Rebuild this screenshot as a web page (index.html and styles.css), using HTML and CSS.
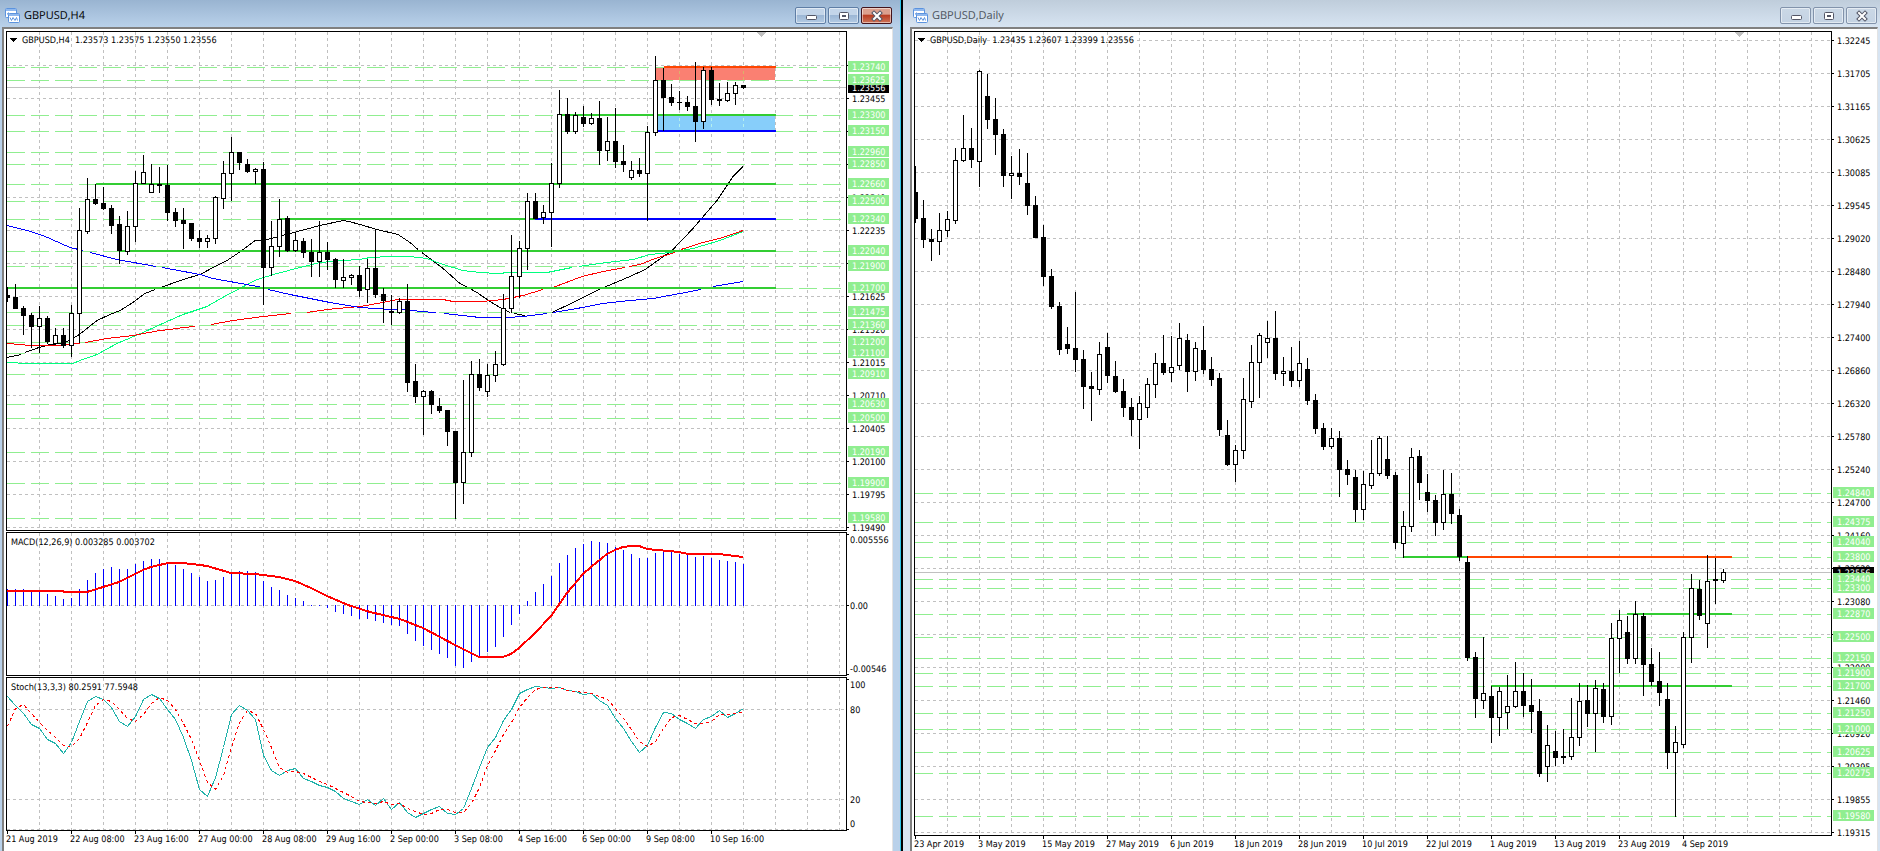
FILE: index.html
```html
<!DOCTYPE html>
<html lang="en">
<head>
    <meta charset="UTF-8">
    <meta name="viewport" content="width=device-width, initial-scale=1.0">
    <title>GBPUSD charts</title>
    <link rel="stylesheet" href="styles.css">
</head>
<body>
    <!-- H4 window -->
    <section class="window active">
        <header class="titlebar">
            <svg class="app-icon" viewBox="0 0 15 15">
                <rect x="0.5" y="0.5" width="11" height="9" rx="1" fill="#fff" stroke="#5b93de"/>
                <path d="M1 2h10" stroke="#8fb8ee" stroke-width="2"/>
                <path d="M2 6h1v-1h1v2h1" stroke="#5b93de" fill="none"/>
                <rect x="3.5" y="5.5" width="11" height="9" rx="1" fill="#fff" stroke="#5b93de"/>
                <path d="M4 7h10" stroke="#8fb8ee" stroke-width="2"/>
                <path d="M5 9.500l1.500 3l1.500 -3l2 3l1.500 -3l1 3" stroke="#5b93de" fill="none"/>
            </svg>
            <h1>GBPUSD,H4</h1>
            <button type="button" aria-label="Minimize"><svg viewBox="0 0 12 12"><rect x="1.500" y="5.500" width="10" height="4" rx="1" fill="#fff" stroke="#535666"/></svg></button>
            <button type="button" aria-label="Restore"><svg viewBox="0 0 12 12"><rect x="1.500" y="2.500" width="9" height="7" rx="1" fill="#fff" stroke="#535666"/><rect x="4.500" y="5.500" width="3" height="1" fill="#9db5d0" stroke="#535666"/></svg></button>
            <button type="button" class="close" aria-label="Close"><svg viewBox="0 0 12 12"><path d="M3 3l6 6M9 3l-6 6" stroke="#535666" stroke-width="4" stroke-linecap="square"/><path d="M3 3l6 6M9 3l-6 6" stroke="#fff" stroke-width="2" stroke-linecap="square"/></svg></button>
        </header>
        <div class="client">
            <svg class="panel price" id="h4Price"></svg>
            <svg class="panel macd" id="h4Macd"></svg>
            <svg class="panel stoch" id="h4Stoch"></svg>
            <ol class="times tall">
                <li>21 Aug 2019</li>
                <li>22 Aug 08:00</li>
                <li>23 Aug 16:00</li>
                <li>27 Aug 00:00</li>
                <li>28 Aug 08:00</li>
                <li>29 Aug 16:00</li>
                <li>2 Sep 00:00</li>
                <li>3 Sep 08:00</li>
                <li>4 Sep 16:00</li>
                <li>6 Sep 00:00</li>
                <li>9 Sep 08:00</li>
                <li>10 Sep 16:00</li>
            </ol>
        </div>
    </section>

    <!-- Daily window -->
    <section class="window daily">
        <header class="titlebar">
            <svg class="app-icon" viewBox="0 0 15 15">
                <rect x="0.5" y="0.5" width="11" height="9" rx="1" fill="#fff" stroke="#5b93de"/>
                <path d="M1 2h10" stroke="#8fb8ee" stroke-width="2"/>
                <path d="M2 6h1v-1h1v2h1" stroke="#5b93de" fill="none"/>
                <rect x="3.5" y="5.5" width="11" height="9" rx="1" fill="#fff" stroke="#5b93de"/>
                <path d="M4 7h10" stroke="#8fb8ee" stroke-width="2"/>
                <path d="M5 9.500l1.500 3l1.500 -3l2 3l1.500 -3l1 3" stroke="#5b93de" fill="none"/>
            </svg>
            <h1>GBPUSD,Daily</h1>
            <button type="button" aria-label="Minimize"><svg viewBox="0 0 12 12"><rect x="1.500" y="5.500" width="10" height="4" rx="1" fill="#fff" stroke="#535666"/></svg></button>
            <button type="button" aria-label="Restore"><svg viewBox="0 0 12 12"><rect x="1.500" y="2.500" width="9" height="7" rx="1" fill="#fff" stroke="#535666"/><rect x="4.500" y="5.500" width="3" height="1" fill="#c9d7e6" stroke="#535666"/></svg></button>
            <button type="button" aria-label="Close"><svg viewBox="0 0 12 12"><path d="M3 3l6 6M9 3l-6 6" stroke="#535666" stroke-width="4" stroke-linecap="square"/><path d="M3 3l6 6M9 3l-6 6" stroke="#fff" stroke-width="2" stroke-linecap="square"/></svg></button>
        </header>
        <div class="client">
            <svg class="panel price" id="d1Price"></svg>
            <ol class="times">
                <li>23 Apr 2019</li>
                <li>3 May 2019</li>
                <li>15 May 2019</li>
                <li>27 May 2019</li>
                <li>6 Jun 2019</li>
                <li>18 Jun 2019</li>
                <li>28 Jun 2019</li>
                <li>10 Jul 2019</li>
                <li>22 Jul 2019</li>
                <li>1 Aug 2019</li>
                <li>13 Aug 2019</li>
                <li>23 Aug 2019</li>
                <li>4 Sep 2019</li>
            </ol>
        </div>
    </section>

    <script src="charts.js"></script>
</body>
</html>
```

FILE: styles.css
```css
* {
    box-sizing: border-box;
}

body {
    margin: 0;
    height: 100vh;
    display: grid;
    grid-template-columns: minmax(0, 903fr) minmax(0, 977fr);
    overflow: hidden;
    background: #000;
    font-family: Tahoma, "DejaVu Sans Condensed", "Noto Sans", sans-serif;
    font-size: 9px;
    color: #000;
    text-rendering: geometricPrecision;
}

/* MDI windows */
.window {
    display: flex;
    flex-direction: column;
    min-width: 0;
    min-height: 0;
}

.window.active {
    padding: 0 7px 0 2px;
    background: #b9d1ea;
    border-right: 1px solid #2bc4e8;
    margin-right: 2px;
}

.window.daily {
    padding: 0 2px 0 7px;
    background: #d7e4f2;
}

.titlebar {
    display: flex;
    align-items: center;
    gap: 2px;
    height: 27px;
    flex: none;
    padding: 4px 8px 0 3px;
    margin: 0 -7px 0 -2px;
    background: linear-gradient(#99b4d1, #b9d1ea);
}

.daily .titlebar {
    margin: 0 -2px 0 -7px;
    padding: 4px 3px 0 10px;
    background: linear-gradient(#bfcddb, #d7e4f2);
}

.app-icon {
    width: 15px;
    height: 15px;
    margin: 0 2px;
}

.daily .app-icon {
    margin-left: 0;
}

.titlebar h1 {
    flex: 1;
    margin: 0;
    font-family: "Segoe UI", "Open Sans", sans-serif;
    font-size: 11px;
    font-weight: normal;
    line-height: 16px;
}

.daily h1 {
    color: #4c535c;
}

.titlebar button {
    display: flex;
    align-items: center;
    justify-content: center;
    width: 31px;
    height: 17px;
    padding: 0;
    border: 1px solid #5f7ea5;
    border-radius: 2px;
    background: linear-gradient(#c3d5e9 45%, #9cb7d5 50%, #b4cbe4);
    box-shadow: inset 0 0 0 1px rgba(255, 255, 255, 0.5);
}

.titlebar button svg {
    width: 12px;
    height: 12px;
}

.titlebar .close {
    border-color: #43131b;
    background: linear-gradient(#dba08f 40%, #b93f25 50%, #cd7458);
}

.daily .titlebar button {
    border-color: #8293ab;
    background: linear-gradient(#cbd8e6, #c4d3e3);
}

.client {
    flex: 1;
    min-height: 0;
    display: flex;
    flex-direction: column;
    gap: 1px;
    padding: 2px 0 0 2px;
    background: #fff;
    border: 2px solid #696969;
    border-color: #808080 #e3e3e3 #fff #808080;
    border-width: 2px 1px 0 2px;
}

.daily .client {
    gap: 0;
}

/* chart panels */
.panel {
    display: block;
    width: 100%;
    min-height: 0;
    overflow: visible;
    shape-rendering: crispEdges;
}

.price {
    flex: 500 1 0;
}

.macd {
    flex: 144 1 0;
}

.stoch {
    flex: 154 1 0;
}

.times {
    display: flex;
    flex: none;
    height: 15px;
    margin: 0;
    padding: 0;
    list-style: none;
    white-space: nowrap;
    line-height: 11px;
}

.times.tall {
    height: 20px;
    margin-top: -1px;
}

.times li {
    flex: none;
    width: 64px;
    padding-top: 4px;
    background: linear-gradient(#000, #000) 1px 0 / 1px 3px no-repeat;
}

/* svg parts */
.grid {
    stroke: #c0c0c0;
    stroke-dasharray: 3 3;
}

.level {
    stroke: #90ee90;
    stroke-dasharray: 18 6;
}

.bid {
    stroke: #c0c0c0;
}

.frame {
    fill: none;
    stroke: #000;
}

.tag-text {
    fill: #fff;
}

.line {
    fill: none;
}

.stoch-signal {
    stroke-dasharray: 3 3;
}
```

FILE: charts.js
```js
// candle: type (w = up, b = down), high, body top, body bottom, low
const h4Candles = `b 287 295 298 302,b 284 297 309 309,b 306 308 316 335,b 313 315 327 348,w 306 318 327 353,b 316 318 342 344,
w 328 335 344 344,b 328 335 346 348,w 305 313 346 357,w 208 230 314 343,w 178 199 232 234,b 184 199 204 205,
b 187 203 209 210,b 205 208 226 234,b 216 224 251 264,w 211 226 252 255,w 171 183 227 242,w 155 172 184 184,
w 164 184 193 193,b 167 184 186 193,b 165 185 213 221,b 208 212 221 227,b 208 220 224 249,b 223 223 239 241,
b 230 238 242 248,w 235 238 242 248,w 196 197 239 244,w 161 173 199 209,w 137 152 174 201,b 152 152 163 170,
b 159 164 172 173,w 168 169 172 184,b 162 169 268 305,w 221 246 268 276,w 199 219 247 257,b 216 218 251 252,
w 233 240 251 252,b 238 241 253 258,b 239 252 262 277,w 221 252 262 277,b 242 252 260 270,b 258 259 280 288,
w 259 277 281 288,w 274 275 278 285,b 266 275 291 297,w 259 268 290 303,b 229 268 295 298,b 288 294 301 323,
b 295 311 313 325,w 298 301 313 314,b 284 301 383 392,b 364 381 397 403,w 390 391 397 435,b 390 391 405 414,
b 398 406 411 413,b 410 410 432 446,b 431 431 483 519,w 380 452 483 504,w 361 374 453 457,b 359 374 388 391,
w 364 375 392 397,w 351 364 376 382,w 294 308 365 366,w 235 276 309 313,w 241 248 277 298,w 193 201 249 270,
b 193 201 219 219,w 205 212 218 224,w 163 183 213 247,w 90 114 184 188,b 98 114 132 134,w 112 115 132 134,
b 106 117 124 127,w 113 118 124 125,b 101 118 151 165,w 117 141 151 161,b 108 141 162 168,b 145 161 165 172,
w 161 170 178 180,b 158 170 174 177,w 126 132 174 221,w 56 80 133 136,b 68 80 98 131,b 84 97 103 106,
b 91 102 103 110,b 96 102 107 111,b 62 106 122 142,w 67 70 122 129,b 67 70 100 105,b 83 99 101 106,
w 82 93 101 102,w 82 85 94 105,b 85 85 88 89`;

const d1Candles = `b 166 192 219 223,b 200 218 240 248,b 229 239 242 261,w 213 230 242 255,w 211 219 231 237,w 148 160 221 224,
w 115 148 161 162,b 128 148 160 168,w 70 71 162 187,b 74 96 120 129,b 98 119 135 155,b 129 134 176 187,
w 156 173 176 199,b 149 173 177 185,b 153 183 206 215,b 196 205 238 238,b 225 237 277 286,b 269 276 307 309,
b 302 306 350 355,b 327 344 349 354,b 292 348 360 372,b 350 359 387 409,b 372 386 389 421,w 342 354 390 395,
b 333 347 376 383,b 361 376 392 393,b 379 391 408 417,b 398 407 420 436,w 396 403 420 449,w 378 384 408 418,
w 353 363 385 398,b 335 363 373 375,w 336 367 373 382,w 323 338 366 370,b 334 340 372 392,w 342 348 372 381,
b 326 350 370 374,b 357 369 380 386,b 373 378 430 436,b 420 435 465 466,w 445 450 465 482,w 378 399 451 459,
w 345 362 402 408,w 333 335 363 398,w 321 338 343 358,b 311 338 374 380,w 357 371 374 386,b 347 371 381 387,
w 341 363 381 387,b 358 369 401 405,b 394 400 429 434,b 423 428 447 450,w 428 438 447 449,b 431 438 470 497,
b 460 469 475 485,b 470 477 510 522,w 471 484 510 520,w 440 473 486 489,w 436 438 474 476,b 436 459 476 479,
b 472 475 543 549,w 511 526 544 558,w 448 457 527 532,b 450 456 483 500,b 474 492 501 512,b 495 500 523 536,
w 470 494 523 530,b 473 494 514 524,b 509 515 557 561,b 556 562 658 661,b 652 657 699 718,w 637 693 701 709,
b 686 696 718 743,w 687 691 718 736,w 675 706 713 729,w 662 691 707 708,b 673 691 706 717,b 679 705 712 733,
b 699 711 774 777,w 725 745 767 782,b 731 751 758 766,b 729 756 758 764,w 698 737 757 760,w 683 701 738 746,
b 685 700 714 727,w 680 688 714 752,b 683 689 717 723,w 623 638 717 725,w 610 620 639 673,b 616 632 659 664,
w 601 614 659 664,b 613 616 665 696,b 648 664 682 686,b 652 681 693 706,b 683 699 753 769,w 726 742 753 817,
w 632 637 745 748,w 574 588 638 663,b 580 589 616 620,w 555 581 624 648,b 558 579 581 604,w 569 572 581 583`;

// horizontal levels: y, price
const h4Levels = [[67, '1.23740'], [80, '1.23625'], [115, '1.23300'], [131, '1.23150'], [152, '1.22960'], [164, '1.22850'],
    [184, '1.22660'], [201, '1.22500'], [219, '1.22340'], [251, '1.22040'], [266, '1.21900'], [288, '1.21700'],
    [312, '1.21475'], [325, '1.21360'], [342, '1.21200'], [353, '1.21100'], [374, '1.20910'], [404, '1.20630'],
    [418, '1.20500'], [452, '1.20190'], [483, '1.19900'], [518, '1.19580']];
const d1Levels = [[493, '1.24840'], [522, '1.24375'], [542, '1.24040'], [557, '1.23800'], [579, '1.23440'], [588, '1.23300'],
    [614, '1.22870'], [637, '1.22500'], [658, '1.22150'], [673, '1.21900'], [686, '1.21700'], [713, '1.21250'],
    [729, '1.21000'], [752, '1.20625'], [773, '1.20275'], [816, '1.19580']];

// scale labels, 33px apart; the empty ones sit fully behind a level tag
const h4Prices = ['', '1.23455', '', '', '1.22540', '1.22235', '', '1.21625', '1.21320',
    '1.21015', '1.20710', '1.20405', '1.20100', '1.19795', '1.19490'];
const d1Prices = ['1.32245', '1.31705', '1.31165', '1.30625', '1.30085', '1.29545', '1.29020', '1.28480', '1.27940',
    '1.27400', '1.26860', '1.26320', '1.25780', '1.25240', '1.24700', '1.24160', '1.23620', '1.23080', '',
    '1.22000', '1.21460', '1.20920', '1.20395', '1.19855', '1.19315'];

// moving averages
const averages = [
    ['#000', 'M7 357L21 354M25 352L39 347L50 344L63 343L78 335L97 320L110 314L120 310L133 302L145 293L155 289M161 287L183 279L200 274L215 266L227 260L242 250L255 240L267 239L290 233L320 225L343 220L349 221L360 224L377 229L398 234L410 242L418 249M422 252L443 268L460 283L468 287L477 292L490 301L500 307L510 312M514 313L525 315M552 312L573 302L599 289L630 276L645 269L672 250L693 228L717 200L733 176L743 166'],
    ['#00ff7f', 'M7 362L28 363L45 363L73 363L80 360L97 354L117 343L143 332L167 321L183 314L207 306L228 294L257 279L277 273L300 267L320 262L343 260L360 259L370 257L390 256L410 256L427 258L443 264L463 270L480 272L497 273L510 272L547 272L557 270L572 267M579 266L607 262L633 259L650 254L670 252L693 248L703 245L720 240L743 231'],
    ['#f00', 'M7 343L20 344L30 345L58 345L80 343M85 342L107 338L133 335L160 330L170 329L183 327L195 326M211 324L233 320L263 316L291 313M307 312L327 309L360 306L383 302L397 299L443 299L453 301L482 301L503 299L523 295L543 289M553 287L582 276L603 271L625 267M629 266L640 264L655 258L675 252M681 249L703 242L723 237L743 230'],
    ['#00f', 'M7 225L27 230L43 235L70 247L83 250M90 252L117 259L156 266M162 267L173 269L200 274L213 278L263 287M268 289L290 294L320 300L330 302L360 307L390 309L407 309L420 311L436 312M444 313L480 317L507 317L523 316L547 313M553 312L577 308L603 303L630 300L653 298L680 293L701 289M713 286L743 281']
];

const macdBars = [589, 589, 589, 591, 591, 594, 596, 599, 598, 589, 580, 573, 569, 567, 569, 569, 564, 561, 559, 559, 562,
    565, 569, 573, 577, 581, 580, 577, 573, 571, 571, 572, 581, 587, 590, 595, 598, 601, 605, 605, 608, 612, 614, 616,
    619, 619, 621, 623, 625, 626, 634, 641, 646, 650, 654, 658, 666, 668, 662, 657, 652, 647, 637, 625, 614, 601, 592,
    584, 576, 563, 555, 548, 544, 541, 542, 543, 547, 550, 554, 558, 558, 553, 551, 552, 554, 555, 557, 556, 558, 560,
    561, 562, 564];
const macdSignal = 'M6 591L63 591L64 592L87 592L103 587L119 582L127 578L143 570L151 567L168 563L182 563L200 565L207 566L231 573L255 574L279 577L295 581L311 588L327 596L348 605L370 612L400 619L423 628L440 637L455 645L471 653L479 657L503 657L511 654L519 648L535 633L551 616L567 593L583 574L591 567L607 554L615 550L623 547L632 546L639 546L647 549L679 552L688 554L719 554L735 556L743 557';

const stochMain = [696, 705, 713, 724, 728, 739, 743, 753, 742, 721, 701, 696, 699, 707, 721, 726, 716, 699, 694, 698, 709,
    719, 737, 760, 789, 796, 777, 747, 714, 705, 710, 719, 755, 770, 775, 770, 768, 778, 781, 785, 787, 791, 798, 801,
    804, 799, 805, 798, 809, 802, 812, 817, 813, 809, 806, 813, 814, 808, 788, 767, 747, 737, 720, 709, 693, 689, 686,
    687, 688, 687, 690, 691, 694, 693, 700, 705, 718, 728, 741, 752, 745, 727, 712, 713, 719, 723, 728, 719, 716, 710,
    717, 713, 708];
const stochSignal = [726, 708, 704, 713, 722, 730, 737, 745, 746, 738, 722, 705, 699, 701, 709, 718, 721, 714, 703, 697,
    700, 709, 723, 739, 760, 782, 789, 775, 747, 722, 710, 713, 729, 747, 767, 772, 771, 773, 777, 781, 784, 788, 792,
    796, 801, 802, 803, 801, 804, 803, 808, 811, 814, 813, 809, 809, 812, 812, 803, 787, 765, 750, 734, 722, 707, 697,
    689, 687, 687, 687, 690, 691, 692, 693, 696, 699, 708, 718, 729, 741, 746, 741, 728, 717, 715, 719, 723, 723, 721,
    714, 714, 713, 712];

const STEP = 8;

function rect(x, y, w, h, fill) {
    return `<rect x="${x}" y="${y}" width="${w}" height="${h}" fill="${fill}"/>`;
}

function hline(x1, x2, y, cls) {
    return `<path class="${cls}" d="M${x1} ${y + 0.5}H${x2}"/>`;
}

function text(x, y, str, cls) {
    return `<text x="${x}" y="${y}" class="${cls || ''}">${str}</text>`;
}

// vertical grid, every 4 candles
function vgrid(x0, y1, y2, right) {
    let out = '';
    for (let x = x0 + 33; x < right; x += 32) {
        out += `<path class="grid" d="M${x + 0.5} ${y1}V${y2}"/>`;
    }
    return out;
}

function candles(data, x0) {
    return data.split(',').map((row, i) => {
        const [type, hi, top, bottom, lo] = row.trim().split(' ');
        const x = x0 + 1 + i * STEP;
        const left = i === 0 ? x : x - 2;
        const width = x + 3 - left;
        let out = rect(x, hi, 1, lo - hi, '#000') + rect(left, top, width, bottom - top, '#000');
        if (type === 'w') {
            out += rect(left + 1, +top + 1, width - 2, bottom - top - 2, '#fff');
        }
        return out;
    }).join('');
}

function polyline(values, x0) {
    return 'M' + values.map((y, i) => `${x0 + 1.5 + i * STEP} ${y + 0.5}`).join('L');
}

// draw a panel, x0/y0 is the top left corner of its frame
function draw(id, x0, y0, build) {
    const svg = document.getElementById(id);
    const w = svg.clientWidth;
    const h = svg.clientHeight;
    const axis = x0 + w - 46;
    const bottom = y0 + h - 1;
    svg.setAttribute('viewBox', `${x0} ${y0} ${w} ${h}`);
    svg.innerHTML = build(axis, bottom) +
        `<path class="frame" d="M${axis + 0.5} ${y0 + 0.5}H${x0 + 0.5}V${bottom + 0.5}H${axis + 0.5}Z"/>`;
}

function priceScale(prices, y0, axis) {
    return prices.map((p, i) => {
        const y = y0 + i * 33;
        return rect(axis, y, 3, 1, '#000') + (p ? text(axis + 6, y + 4, p) : '');
    }).join('');
}

function tag(axis, y, str, fill) {
    return rect(axis + 2, y - 6, 41, 11, fill) + text(axis + 6, y + 3, str, 'tag-text');
}

function marker(x) {
    return `<path d="M${x - 5} 32h10l-5 5z" fill="#c0c0c0"/>`;
}

function h4Price(axis, bottom) {
    let out = vgrid(6, 32, bottom, axis);
    h4Prices.forEach((p, i) => {
        if (i !== 2 && i !== 3) out += hline(7, axis, 65 + i * 33, 'grid');
    });
    h4Levels.forEach(l => out += hline(7, axis, l[0], 'level'));
    out += hline(7, axis, 87, 'bid');

    // supply and demand zones
    out += rect(656, 68, 119, 12, '#fa8072') + rect(656, 116, 119, 14, '#87cefa');
    [679, 711, 743].forEach(x => {
        out += `<path d="M${x + 0.5} 71V80" stroke="#dcb06a" stroke-dasharray="3 3"/>`;
        out += `<path d="M${x + 0.5} 118V130" stroke="#b4f0ee" stroke-dasharray="3 3"/>`;
    });
    averages.forEach(a => out += `<path class="line" transform="translate(0 0.5)" stroke="${a[0]}" d="${a[1]}"/>`);
    out += rect(96, 183, 680, 2, '#32cd32') + rect(280, 218, 255, 2, '#32cd32') + rect(535, 218, 241, 2, '#00f');
    out += rect(119, 250, 657, 2, '#32cd32') + rect(7, 287, 769, 2, '#32cd32') + rect(561, 114, 215, 2, '#32cd32');
    out += rect(657, 130, 119, 2, '#00f') + rect(664, 66, 112, 2, '#ff4500');
    out += candles(h4Candles, 6);
    out += marker(761);

    out += `<path d="M10 38h7l-3.500 4z"/>` + text(22, 43, 'GBPUSD,H4&nbsp; 1.23573 1.23575 1.23550 1.23556');
    out += priceScale(h4Prices, 65, axis);
    out += tag(axis, 88, '1.23556', '#000');
    h4Levels.forEach(l => out += tag(axis, l[0], l[1], '#90ee90'));
    return out;
}

function h4Macd(axis, bottom) {
    let out = vgrid(6, 533, bottom, axis) + hline(7, axis, 605, 'grid');
    macdBars.forEach((y, i) => {
        const top = Math.min(y, 605);
        out += rect(7 + i * STEP, top, 1, Math.max(y, 606) - top, '#00f');
    });
    out += `<path class="line" stroke="#f00" stroke-width="2" d="${macdSignal}"/>`;
    out += text(11, 545, 'MACD(12,26,9) 0.003285 0.003702');
    out += [534, 605, 674].map(y => rect(axis, y, 3, 1, '#000')).join('');
    out += text(axis + 4, 543, '0.005556') + text(axis + 4, 609, '0.00') + text(axis + 4, 672, '-0.00546');
    return out;
}

function h4Stoch(axis, bottom) {
    let out = vgrid(6, 678, bottom, axis) + hline(7, axis, 709, 'grid') + hline(7, axis, 799, 'grid') + hline(7, axis, 829, 'grid');
    out += `<path class="line" stroke="#20b2aa" d="${polyline(stochMain, 6)}"/>`;
    out += `<path class="line stoch-signal" stroke="#f00" d="${polyline(stochSignal, 6)}"/>`;
    out += text(11, 690, 'Stoch(13,3,3) 80.2591 77.5948');
    out += rect(axis, 679, 3, 1, '#000') + rect(axis, 829, 3, 1, '#000');
    out += text(axis + 4, 688, '100') + text(axis + 4, 713, '80') + text(axis + 4, 803, '20') + text(axis + 4, 827, '0');
    return out;
}

function d1Price(axis, bottom) {
    let out = vgrid(914, 32, bottom, axis);
    d1Prices.forEach((p, i) => out += hline(915, axis, 40 + i * 33, 'grid'));
    d1Levels.forEach(l => out += hline(915, axis, l[0], 'level'));
    out += hline(915, axis, 572, 'bid');
    out += rect(1403, 556, 64, 2, '#32cd32') + rect(1467, 556, 265, 2, '#ff4500');
    out += rect(1627, 613, 105, 2, '#32cd32') + rect(1491, 685, 241, 2, '#32cd32');
    out += candles(d1Candles, 914);
    out += marker(1739);

    out += `<path d="M918 38h7l-3.500 4z"/>` + text(930, 43, 'GBPUSD,Daily&nbsp; 1.23435 1.23607 1.23399 1.23556');
    out += priceScale(d1Prices, 40, axis);
    out += tag(axis, 573, '1.23556', '#000');
    d1Levels.forEach(l => out += tag(axis, l[0], l[1], '#90ee90'));
    return out;
}

function drawAll() {
    draw('h4Price', 6, 31, h4Price);
    draw('h4Macd', 6, 532, h4Macd);
    draw('h4Stoch', 6, 677, h4Stoch);
    draw('d1Price', 914, 31, d1Price);
}

drawAll();
window.addEventListener('resize', drawAll);
```
